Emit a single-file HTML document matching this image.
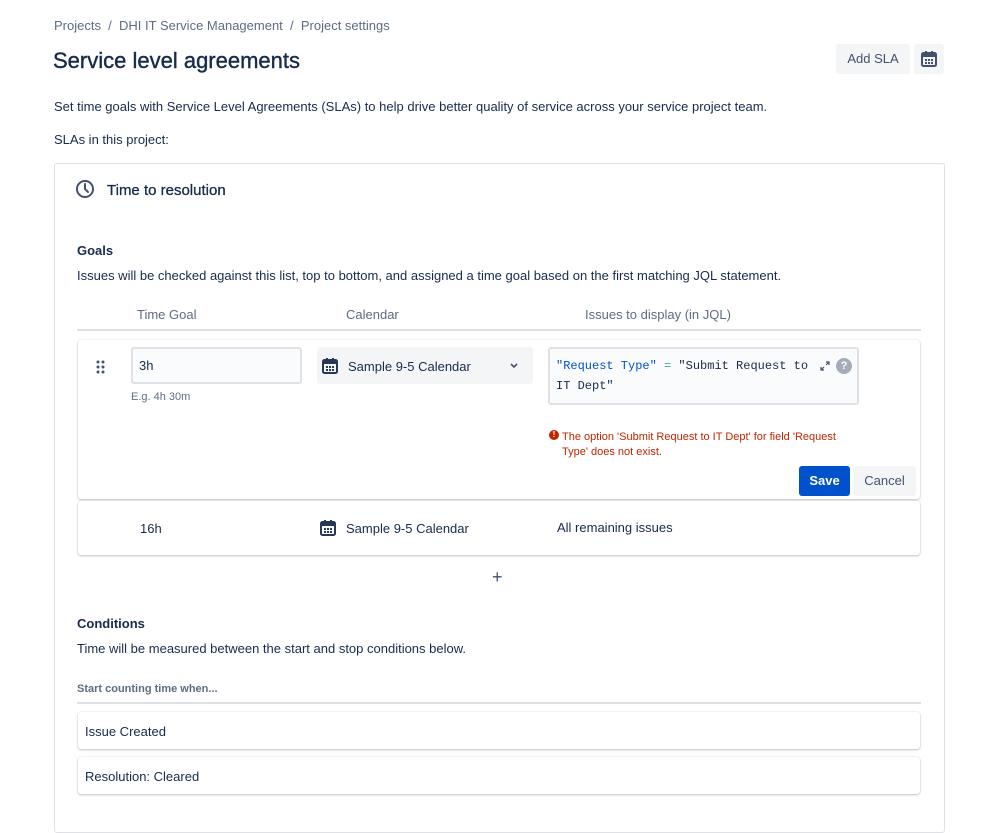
<!DOCTYPE html>
<html><head><meta charset="utf-8"><style>
*{box-sizing:border-box;margin:0;padding:0}
body{width:999px;height:813px;background:#fff;font-family:"Liberation Sans",sans-serif;color:#172b4d;font-size:13px;position:relative;overflow:hidden}
.a{position:absolute;white-space:nowrap}
.muted{color:#5e6c84}
.card{position:absolute;border:1px solid #dfe1e6;border-radius:3px;background:#fff}
.row{position:absolute;border-radius:3px;background:#fff;box-shadow:0 1px 2px rgba(9,30,66,.25),0 0 1px rgba(9,30,66,.2)}
.mono{font-family:"Liberation Mono",monospace}
</style></head><body>
<div class="a muted" style="left:54px;top:18px;font-size:13px">Projects&nbsp;&nbsp;/&nbsp;&nbsp;DHI IT Service Management&nbsp;&nbsp;/&nbsp;&nbsp;Project settings</div>
<div class="a" style="left:53px;top:48px;font-size:22px;-webkit-text-stroke:0.4px #172b4d">Service level agreements</div>
<div class="a" style="left:836px;top:44px;width:74px;height:30px;background:#f4f5f7;border-radius:3px;font-size:13px;line-height:30px;text-align:center;color:#42526e">Add SLA</div>
<div class="a" style="left:914px;top:44px;width:30px;height:30px;background:#f4f5f7;border-radius:3px"></div>
<svg class="a" style="left:920px;top:50px" width="18" height="18" viewBox="0 0 18 18"><rect x="2" y="3" width="14" height="13" rx="1.5" fill="none" stroke="#42526e" stroke-width="2"/><rect x="2" y="3" width="14" height="4" fill="#42526e"/><rect x="5" y="1" width="2" height="3" fill="#42526e"/><rect x="11" y="1" width="2" height="3" fill="#42526e"/><g fill="#42526e"><rect x="5" y="9" width="2" height="2"/><rect x="8" y="9" width="2" height="2"/><rect x="11" y="9" width="2" height="2"/><rect x="5" y="12" width="2" height="2"/><rect x="8" y="12" width="2" height="2"/><rect x="11" y="12" width="2" height="2"/></g></svg>
<div class="a" style="left:54px;top:99px">Set time goals with Service Level Agreements (SLAs) to help drive better quality of service across your service project team.</div>
<div class="a" style="left:54px;top:132px">SLAs in this project:</div>
<div class="card" style="left:54px;top:163px;width:891px;height:670px"></div>
<svg class="a" style="left:75px;top:179px" width="20" height="20" viewBox="0 0 20 20"><circle cx="10" cy="10" r="8" fill="none" stroke="#42526e" stroke-width="2"/><path d="M10 5v5l3 3" fill="none" stroke="#42526e" stroke-width="2" stroke-linecap="round"/></svg>
<div class="a" style="left:107px;top:182px;font-size:15px;-webkit-text-stroke:0.3px #172b4d">Time to resolution</div>
<div class="a" style="left:77px;top:243px;font-weight:bold">Goals</div>
<div class="a" style="left:77px;top:268px">Issues will be checked against this list, top to bottom, and assigned a time goal based on the first matching JQL statement.</div>
<div class="a muted" style="left:137px;top:307px">Time Goal</div>
<div class="a muted" style="left:346px;top:307px">Calendar</div>
<div class="a muted" style="left:585px;top:307px">Issues to display (in JQL)</div>
<div class="a" style="left:77px;top:329px;width:844px;height:2px;background:#dfe1e6"></div>
<div class="row" style="left:78px;top:340px;width:842px;height:159px"></div>
<svg class="a" style="left:95px;top:359px" width="12" height="16"><g fill="#42526e"><circle cx="3" cy="3" r="1.5"/><circle cx="8" cy="3" r="1.5"/><circle cx="3" cy="8" r="1.5"/><circle cx="8" cy="8" r="1.5"/><circle cx="3" cy="13" r="1.5"/><circle cx="8" cy="13" r="1.5"/></g></svg>
<div class="a" style="left:131px;top:347px;width:171px;height:37px;background:#fafbfc;border:2px solid #dfe1e6;border-radius:3px;padding:9px 6px">3h</div>
<div class="a muted" style="left:131px;top:391px;font-size:11px">E.g. 4h 30m</div>
<div class="a" style="left:317px;top:347px;width:216px;height:37px;background:#f4f5f7;border-radius:3px"></div>
<svg class="a" style="left:321px;top:357px" width="18" height="18" viewBox="0 0 18 18"><rect x="2" y="3" width="14" height="13" rx="1.5" fill="none" stroke="#253858" stroke-width="2"/><rect x="2" y="3" width="14" height="4" fill="#253858"/><rect x="5" y="1" width="2" height="3" fill="#253858"/><rect x="11" y="1" width="2" height="3" fill="#253858"/><g fill="#253858"><rect x="5" y="9" width="2" height="2"/><rect x="8" y="9" width="2" height="2"/><rect x="11" y="9" width="2" height="2"/><rect x="5" y="12" width="2" height="2"/><rect x="8" y="12" width="2" height="2"/><rect x="11" y="12" width="2" height="2"/></g></svg>
<div class="a" style="left:348px;top:359px">Sample 9-5 Calendar</div>
<svg class="a" style="left:509px;top:362px" width="10" height="8"><path d="M2 2l3 3 3-3" fill="none" stroke="#42526e" stroke-width="1.6"/></svg>
<div class="a" style="left:548px;top:347px;width:311px;height:58px;background:#fafbfc;border:2px solid #dfe1e6;border-radius:3px"></div>
<div class="a mono" style="left:556px;top:356px;font-size:12px;line-height:20px;white-space:normal;width:262px"><span style="color:#0052cc">"Request Type"</span> <span style="color:#36b37e">=</span> "Submit Request to IT Dept"</div>
<svg class="a" style="left:819px;top:360px" width="12" height="12"><path d="M2 10l3-3M7 5l3-3M7 2h3v3M2 7v3h3" fill="none" stroke="#42526e" stroke-width="1.2"/></svg>
<div class="a" style="left:836px;top:358px;width:16px;height:16px;border-radius:50%;background:#a5adba;color:#fff;font-size:11px;font-weight:bold;text-align:center;line-height:16px">?</div>
<div class="a" style="left:549px;top:430px;width:10px;height:10px;border-radius:50%;background:#bf2600;color:#fff;font-size:8px;font-weight:bold;text-align:center;line-height:10px">!</div>
<div class="a" style="left:562px;top:430px;font-size:11px;color:#bf2600;line-height:15px;white-space:normal;width:300px">The option 'Submit Request to IT Dept' for field 'Request<br>Type' does not exist.</div>
<div class="a" style="left:799px;top:466px;width:51px;height:30px;background:#0052cc;border-radius:3px;color:#fff;font-weight:bold;text-align:center;line-height:30px">Save</div>
<div class="a" style="left:853px;top:466px;width:63px;height:30px;background:#f4f5f7;border-radius:3px;color:#42526e;text-align:center;line-height:30px">Cancel</div>
<div class="row" style="left:78px;top:501px;width:842px;height:54px"></div>
<div class="a" style="left:140px;top:521px">16h</div>
<svg class="a" style="left:319px;top:519px" width="18" height="18" viewBox="0 0 18 18"><rect x="2" y="3" width="14" height="13" rx="1.5" fill="none" stroke="#253858" stroke-width="2"/><rect x="2" y="3" width="14" height="4" fill="#253858"/><rect x="5" y="1" width="2" height="3" fill="#253858"/><rect x="11" y="1" width="2" height="3" fill="#253858"/><g fill="#253858"><rect x="5" y="9" width="2" height="2"/><rect x="8" y="9" width="2" height="2"/><rect x="11" y="9" width="2" height="2"/><rect x="5" y="12" width="2" height="2"/><rect x="8" y="12" width="2" height="2"/><rect x="11" y="12" width="2" height="2"/></g></svg>
<div class="a" style="left:346px;top:521px">Sample 9-5 Calendar</div>
<div class="a" style="left:557px;top:520px">All remaining issues</div>
<div class="a" style="left:492px;top:567px;font-size:18px;color:#42526e">+</div>
<div class="a" style="left:77px;top:616px;font-weight:bold">Conditions</div>
<div class="a" style="left:77px;top:641px">Time will be measured between the start and stop conditions below.</div>
<div class="a muted" style="left:77px;top:683px;font-size:11px;font-weight:bold">Start counting time when...</div>
<div class="a" style="left:77px;top:702px;width:844px;height:2px;background:#dfe1e6"></div>
<div class="row" style="left:78px;top:712px;width:842px;height:37px"></div>
<div class="a" style="left:85px;top:724px">Issue Created</div>
<div class="row" style="left:78px;top:757px;width:842px;height:37px"></div>
<div class="a" style="left:85px;top:769px">Resolution: Cleared</div>
</body></html>
